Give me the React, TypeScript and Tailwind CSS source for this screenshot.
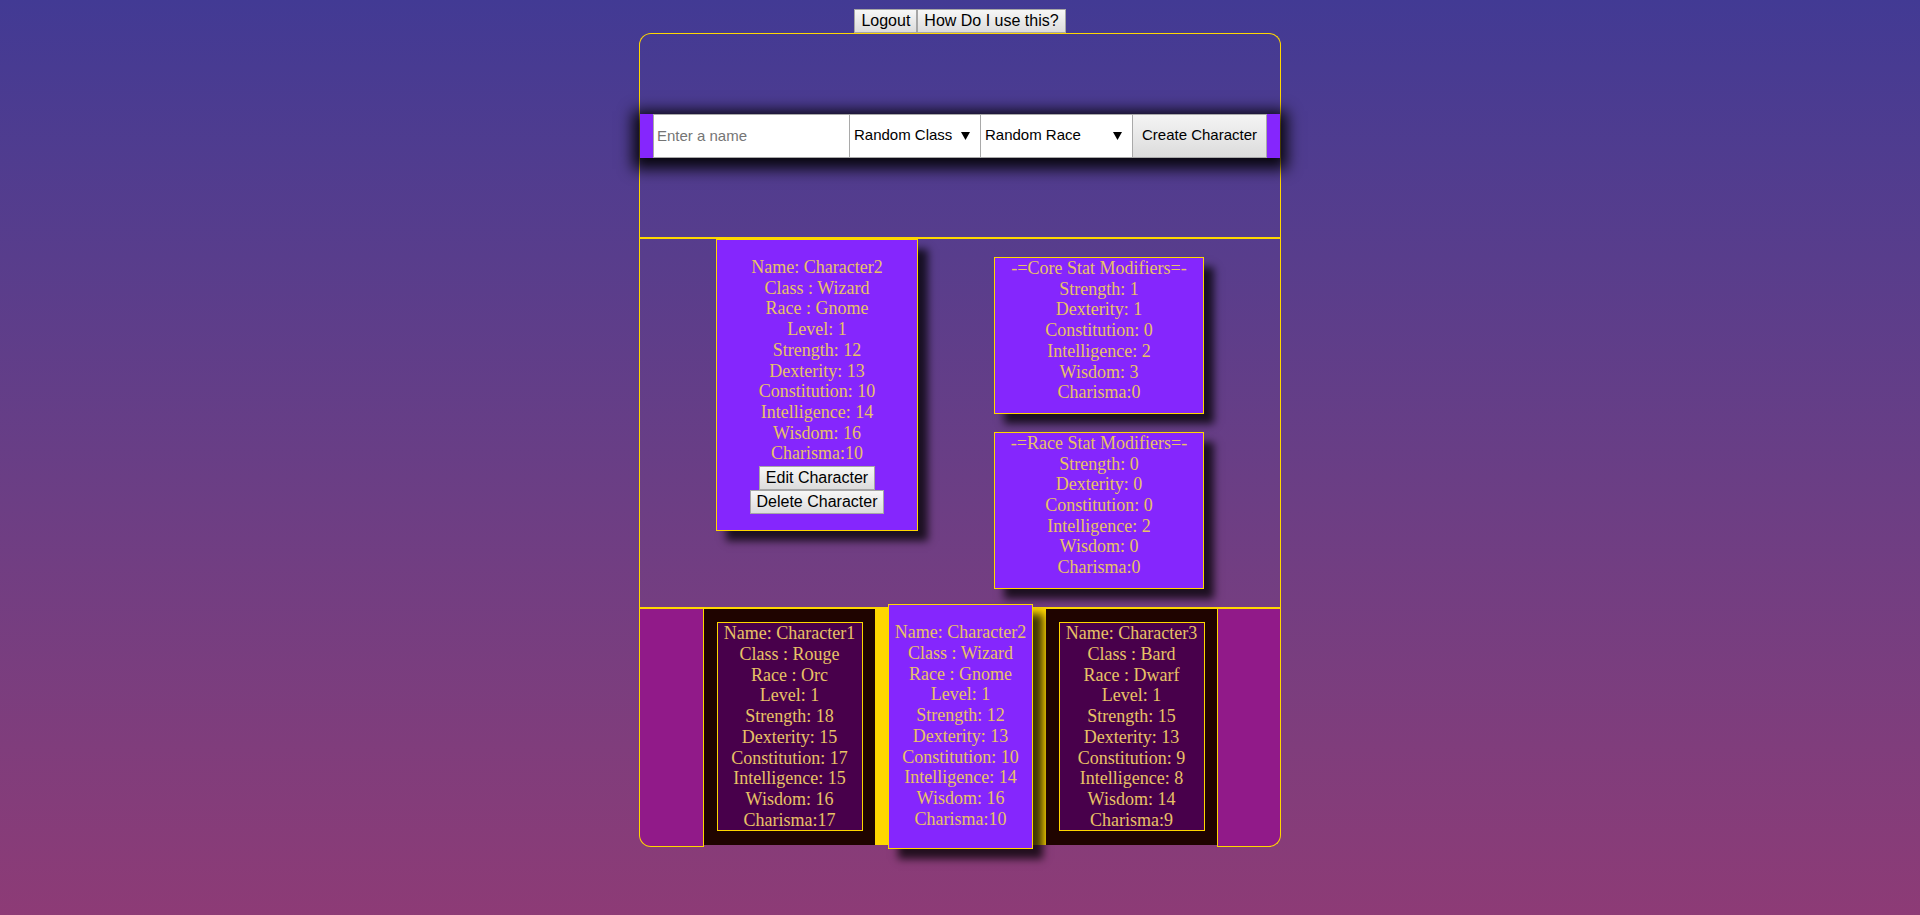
import { FC } from "react";

type Character = {
    name: string
    cls: string
    race: string
    level: number
    str: number
    dex: number
    con: number
    int: number
    wis: number
    cha: number
}

const characters: Character[] = [
    { name: 'Character1', cls: 'Rouge', race: 'Orc', level: 1, str: 18, dex: 15, con: 17, int: 15, wis: 16, cha: 17 },
    { name: 'Character2', cls: 'Wizard', race: 'Gnome', level: 1, str: 12, dex: 13, con: 10, int: 14, wis: 16, cha: 10 },
    { name: 'Character3', cls: 'Bard', race: 'Dwarf', level: 1, str: 15, dex: 13, con: 9, int: 8, wis: 14, cha: 9 },
]

const serif = "font-['Liberation_Serif','Times_New_Roman',serif] text-[18px] leading-[20.7px] text-[#e8c266] text-center"
const sans = "font-['Liberation_Sans',Arial,sans-serif] text-[16px] leading-[18px] text-black"
const formFont = "font-['Liberation_Sans',Arial,sans-serif] text-[15px] text-black"
const btn = "border border-[#a6a6a6] bg-gradient-to-b from-[#f7f7f7] to-[#dcdcdc] px-[6px] py-[2px] whitespace-nowrap " + sans

const Arrow = () => (
    <svg width="9" height="9" viewBox="0 0 9 9" className="shrink-0">
        <path d="M0 1 L9 1 L4.5 9 Z" fill="#000" />
    </svg>
)

const StatLines: FC<{ c: Character }> = ({ c }) => (
    <>
        <p>Name: {c.name}</p>
        <p>Class : {c.cls}</p>
        <p>Race : {c.race}</p>
        <p>Level: {c.level}</p>
        <p>Strength: {c.str}</p>
        <p>Dexterity: {c.dex}</p>
        <p>Constitution: {c.con}</p>
        <p>Intelligence: {c.int}</p>
        <p>Wisdom: {c.wis}</p>
        <p>Charisma:{c.cha}</p>
    </>
)

const Modifiers: FC<{ title: string, values: number[] }> = ({ title, values }) => (
    <div className={"w-[210px] border border-[#ffd700] bg-[#8526fd] pb-[10px] shadow-[10px_10px_8px_rgba(0,0,0,0.75)] " + serif}>
        <p>-={title}=-</p>
        <p>Strength: {values[0]}</p>
        <p>Dexterity: {values[1]}</p>
        <p>Constitution: {values[2]}</p>
        <p>Intelligence: {values[3]}</p>
        <p>Wisdom: {values[4]}</p>
        <p>Charisma:{values[5]}</p>
    </div>
)

const SideCard: FC<{ c: Character }> = ({ c }) => (
    <div className="w-[171px] self-stretch bg-[#1f0400] flex items-center justify-center">
        <div className={"w-[146px] border border-[#ffd700] bg-[#48004b] " + serif}>
            <StatLines c={c} />
        </div>
    </div>
)

export default function App() {
    const selected = characters[1]

    return (
        <div className="min-h-screen w-full bg-gradient-to-b from-[#423a94] to-[#8d3b76] pt-[9px]">
            <div className="flex justify-center">
                <button className={btn + " h-[24px]"}>Logout</button>
                <button className={btn + " h-[24px]"}>How Do I use this?</button>
            </div>

            <div className="w-[642px] mx-auto">
                <div className="border-t border-x border-[#ffd700] rounded-t-[12px]">
                    {/* create form */}
                    <div className="h-[205px] flex items-center border-b-2 border-[#ffd700]">
                        <div className="w-full h-[44px] bg-[#8526fd] flex justify-center shadow-[0_4px_14px_7px_rgba(0,0,0,0.9)]">
                            <input
                                placeholder="Enter a name"
                                className={"w-[197px] h-[44px] bg-white border border-[#a9a9a9] pl-[3px] outline-none placeholder:text-[#757575] " + formFont}
                            />
                            <div className={"w-[131px] h-[44px] bg-white border-y border-r border-[#a9a9a9] flex items-center justify-between pl-[4px] pr-[10px] " + formFont}>
                                <span>Random Class</span>
                                <Arrow />
                            </div>
                            <div className={"w-[152px] h-[44px] bg-white border-y border-r border-[#a9a9a9] flex items-center justify-between pl-[4px] pr-[10px] " + formFont}>
                                <span>Random Race</span>
                                <Arrow />
                            </div>
                            <button className={"w-[134px] h-[44px] border border-l-0 border-[#a9a9a9] bg-gradient-to-b from-[#f4f4f4] to-[#dcdcdc] " + formFont}>
                                Create Character
                            </button>
                        </div>
                    </div>

                    {/* selected character */}
                    <div className="flex justify-evenly items-start border-b-2 border-[#ffd700]">
                        <div className={"w-[202px] border border-[#ffd700] bg-[#8526fd] pt-[17px] pb-[16px] shadow-[10px_10px_8px_rgba(0,0,0,0.75)] flex flex-col items-center " + serif}>
                            <StatLines c={selected} />
                            <button className={btn + " mt-[2px]"}>Edit Character</button>
                            <button className={btn}>Delete Character</button>
                        </div>
                        <div className="my-[18px] flex flex-col gap-[18px]">
                            <Modifiers title="Core Stat Modifiers" values={[1, 1, 0, 2, 3, 0]} />
                            <Modifiers title="Race Stat Modifiers" values={[0, 0, 0, 2, 0, 0]} />
                        </div>
                    </div>
                </div>

                {/* carousel */}
                <div className="flex">
                    <div className="w-[65px] h-[238px] bg-[#911a89] border-l border-r border-b border-[#ffd700] rounded-bl-[12px]" />
                    <div className="w-[513px] h-[236px] bg-[#ffd700] flex items-center justify-between">
                        <SideCard c={characters[0]} />
                        <div className={"w-[145px] h-[245px] shrink-0 border border-[#ffd700] bg-[#8526fd] pt-[17px] shadow-[10px_10px_8px_rgba(0,0,0,0.75)] " + serif}>
                            <StatLines c={characters[1]} />
                        </div>
                        <SideCard c={characters[2]} />
                    </div>
                    <div className="w-[64px] h-[238px] bg-[#911a89] border-l border-r border-b border-[#ffd700] rounded-br-[12px]" />
                </div>
            </div>
        </div>
    )
}
